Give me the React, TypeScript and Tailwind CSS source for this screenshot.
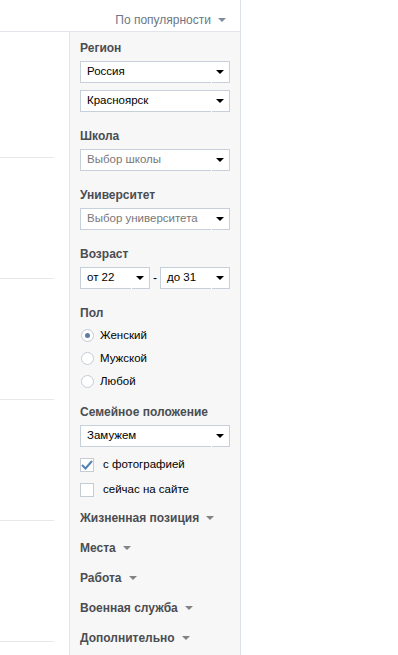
import { useState } from "react";

const font = { fontFamily: '"Liberation Sans", Arial, sans-serif' };

function Caret({ className = "" }: { className?: string }) {
  return (
    <svg width="8" height="4" viewBox="0 0 8 4" className={className}>
      <path d="M0 0 H8 L4 4 Z" fill="currentColor" />
    </svg>
  );
}

function Select({ value, placeholder, w = "w-[150px]" }: { value: string; placeholder?: boolean; w?: string }) {
  return (
    <div className={`relative flex h-[22px] ${w} items-center justify-between border border-[#c5d0db] bg-white pl-[6px] pr-[5px]`}>
      <span className={`text-[11.5px] leading-none ${placeholder ? "text-[#777777]" : "text-black"}`}>{value}</span>
      <Caret className="text-black" />
      <span className="absolute bottom-[-1px] right-[17px] h-[1px] w-[1px] bg-white" />
    </div>
  );
}

function Label({ children, className = "" }: { children: React.ReactNode; className?: string }) {
  return <div className={`text-[12px] font-bold leading-[15px] text-[#4a4d52] ${className}`}>{children}</div>;
}

function Radio({ label, checked }: { label: string; checked?: boolean }) {
  return (
    <div className="flex h-[23px] items-center">
      <span className="ml-[1px] flex h-[13px] w-[13px] items-center justify-center rounded-full border border-[#c5ccd4] bg-white">
        {checked && <span className="h-[5px] w-[5px] rounded-full bg-[#5d7ea3]" />}
      </span>
      <span className="ml-[6px] text-[11.5px] text-black">{label}</span>
    </div>
  );
}

function Check({ label, checked }: { label: string; checked?: boolean }) {
  return (
    <div className="flex h-[25px] items-center">
      <span className="flex h-[14px] w-[14px] items-center justify-center border border-[#c5ccd4] bg-white">
        {checked && (
          <svg width="12" height="10" viewBox="0 0 12 10">
            <path d="M1 5 L4.5 8.5 L11 1" fill="none" stroke="#5181b8" strokeWidth="2" />
          </svg>
        )}
      </span>
      <span className="ml-[9px] text-[11.5px] text-black">{label}</span>
    </div>
  );
}

export default function App() {
  const [gender] = useState("Женский");
  const more = ["Жизненная позиция", "Места", "Работа", "Военная служба", "Дополнительно"];

  return (
    <div className="h-[655px] w-[398px] overflow-hidden bg-white" style={font}>
      <div className="h-full w-[241px] border-r border-[#dce1e6]">
        {/* Sort header */}
        <div className="flex h-[32px] items-center justify-end border-b border-[#e1e5eb] pt-[8px] pr-[14px] text-[12px] text-[#6b7784]">
          По популярности
          <Caret className="ml-[7px] mt-[1px] text-[#7e8c9c]" />
        </div>

        <div className="flex h-[623px]">
          {/* Results list */}
          <div className="w-[69px] shrink-0 pr-[15px]">
            <div className="h-[126px] border-b border-[#e7e8ec]" />
            {[0, 1, 2, 3].map((i) => (
              <div key={i} className="h-[121px] border-b border-[#e7e8ec]" />
            ))}
          </div>

          {/* Filters */}
          <div className="flex-1 border-l border-[#e1e5eb] bg-[#f7f7f7] pl-[10px] pt-[9px]">
            <Label className="mb-[5px]">Регион</Label>
            <Select value="Россия" />
            <div className="mt-[7px]">
              <Select value="Красноярск" />
            </div>

            <Label className="mb-[5px] mt-[17px]">Школа</Label>
            <Select value="Выбор школы" placeholder />

            <Label className="mb-[5px] mt-[17px]">Университет</Label>
            <Select value="Выбор университета" placeholder />

            <Label className="mb-[5px] mt-[17px]">Возраст</Label>
            <div className="flex w-[150px] items-center">
              <Select value="от 22" w="w-[70px]" />
              <span className="mx-auto text-[12px] text-black">-</span>
              <Select value="до 31" w="w-[70px]" />
            </div>

            <Label className="mb-[3px] mt-[17px]">Пол</Label>
            {["Женский", "Мужской", "Любой"].map((g) => (
              <Radio key={g} label={g} checked={g === gender} />
            ))}

            <Label className="mb-[5px] mt-[12px]">Семейное положение</Label>
            <Select value="Замужем" />
            <div className="mt-[5px]">
              <Check label="с фотографией" checked />
              <Check label="сейчас на сайте" />
            </div>

            <div className="mt-[1px]">
              {more.map((m) => (
                <div key={m} className="flex h-[30px] items-center">
                  <Label>{m}</Label>
                  <Caret className="ml-[7px] text-[#828282]" />
                </div>
              ))}
            </div>
          </div>
        </div>
      </div>
    </div>
  );
}
